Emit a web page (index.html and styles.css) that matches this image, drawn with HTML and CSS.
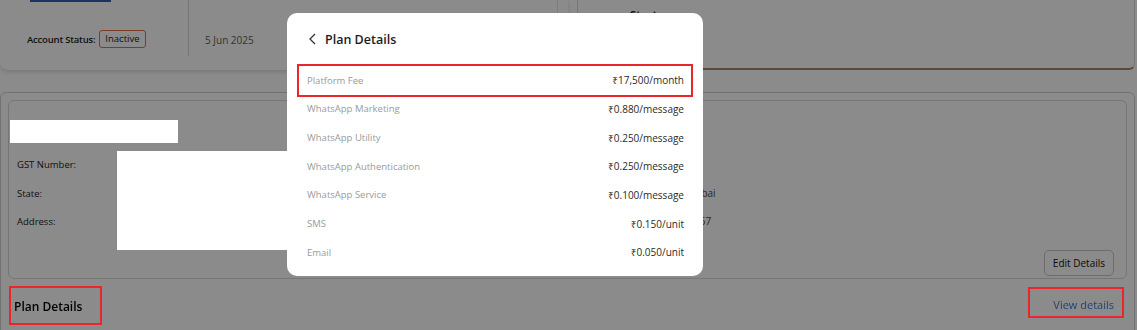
FILE: index.html
```html
<!DOCTYPE html>
<html lang="en">
<head>
  <meta charset="UTF-8" />
  <meta name="viewport" content="width=device-width, initial-scale=1.0" />
  <title>Account – Plan Details</title>
  <link rel="stylesheet" href="styles.css">
</head>
<body>
  <div class="top">
    <div class="account-card">
      <div class="col col-status">
        <div class="btn-edge"></div>
        <div class="status-line">
          <span class="status-label">Account Status:</span>
          <span class="badge">Inactive</span>
        </div>
      </div>
      <div class="col col-date">
        <span class="date">5 Jun 2025</span>
      </div>
      <div class="col col-end"></div>
    </div>
    <div class="plan-card">
      <span class="plan-name">Starter</span>
    </div>
  </div>

  <div class="section">
    <div class="info-card">
      <div class="redact redact-name"></div>
      <div class="fields">
        <div class="labels">
          <div class="label">GST Number:</div>
          <div class="label">State:</div>
          <div class="label">Address:</div>
        </div>
        <div class="redact redact-values"></div>
        <div class="values-right">
          <div class="value">&nbsp;</div>
          <div class="value">Mumbai</div>
          <div class="value">400057</div>
        </div>
      </div>
      <div class="card-foot">
        <button class="btn-outline">Edit Details</button>
      </div>
    </div>

    <div class="plan-row">
      <h2 class="mark plan-title">Plan Details</h2>
      <a class="mark view-link" href="#">View details</a>
    </div>
  </div>

  <div class="overlay"></div>

  <div class="modal">
    <div class="modal-head">
      <svg class="back" width="10" height="12" viewBox="0 0 10 12">
        <polyline points="7,1 2,6 7,11" fill="none" stroke="#333" stroke-width="1.3" />
      </svg>
      <span class="modal-title">Plan Details</span>
    </div>
    <div class="rates">
      <div class="rate rate-marked"><span class="rate-name">Platform Fee</span><span class="rate-value">₹17,500/month</span></div>
      <div class="rate"><span class="rate-name">WhatsApp Marketing</span><span class="rate-value">₹0.880/message</span></div>
      <div class="rate"><span class="rate-name">WhatsApp Utility</span><span class="rate-value">₹0.250/message</span></div>
      <div class="rate"><span class="rate-name">WhatsApp Authentication</span><span class="rate-value">₹0.250/message</span></div>
      <div class="rate"><span class="rate-name">WhatsApp Service</span><span class="rate-value">₹0.100/message</span></div>
      <div class="rate"><span class="rate-name">SMS</span><span class="rate-value">₹0.150/unit</span></div>
      <div class="rate"><span class="rate-name">Email</span><span class="rate-value">₹0.050/unit</span></div>
    </div>
  </div>
</body>
</html>
```

FILE: styles.css
```css
:root {
  --line: #d8d8d8;
  --text: #1c1c1c;
  --muted: #9a9a9a;
  --mark: #e8262b;
}
* {
  box-sizing: border-box;
  font-family: "Open Sans", "Noto Sans", sans-serif;
}
body {
  margin: 0;
  width: 1137px;
  height: 330px;
  overflow: hidden;
  background: #fff;
  color: var(--text);
}

/* top cards */
.top {
  display: flex;
  height: 70px;
}
.account-card {
  width: 568px;
  display: flex;
  border-radius: 0 0 8px 8px;
  box-shadow: 0 2px 4px rgba(0, 0, 0, 0.14);
}
.col {
  height: 56px;
}
.col-status {
  width: 188px;
  padding-left: 30px;
}
.btn-edge {
  width: 81px;
  height: 2px;
  background: #2d62b5;
}
.status-line {
  margin-top: 28px;
  margin-left: -3px;
  display: flex;
  align-items: center;
  gap: 4px;
}
.status-label {
  font-size: 9.5px;
  font-weight: 600;
  letter-spacing: -0.2px;
}
.badge {
  font-size: 9.5px;
  line-height: 16px;
  padding: 0 5px;
  border: 1px solid #e8703f;
  border-radius: 3px;
}
.col-date {
  width: 369px;
  border-left: 1px solid var(--line);
  padding: 27px 0 0 16px;
}
.date {
  font-size: 10px;
  color: #606060;
}
.col-end {
  flex: 1;
  border-left: 1px solid #e6e6e6;
}
.plan-card {
  flex: 1;
  margin: 0 2px 0 9px;
  border: 1px solid var(--line);
  border-top: none;
  border-bottom: 2px solid #a8846a;
  border-radius: 0 0 6px 6px;
  padding-left: 52px;
}
.plan-name {
  display: block;
  margin-top: 7px;
  font-size: 11px;
  font-weight: 700;
}

/* lower section */
.section {
  width: 1135px;
  margin-top: 22px;
  border: 1px solid #d0d0d0;
  border-radius: 6px;
  padding: 7px 7px 0;
}
.info-card {
  height: 179px;
  border: 1px solid var(--line);
  border-radius: 6px;
  display: flex;
  flex-direction: column;
}
.redact {
  flex: none;
  background: #fff;
  position: relative;
  z-index: 15;
}
.redact-name {
  width: 168px;
  height: 23px;
  margin: 19px 0 0 1px;
}
.fields {
  flex: none;
  display: flex;
  align-items: flex-start;
  margin-top: 8px;
}
.labels {
  flex: none;
  width: 108px;
  padding-left: 8px;
}
.label {
  font-size: 9.5px;
  line-height: 28.5px;
}
.redact-values {
  width: 170px;
  height: 99px;
}
.values-right {
  flex: none;
  margin: -1px 0 0 390px;
}
.value {
  font-size: 10px;
  line-height: 28.5px;
  color: #4a4a4a;
}
.card-foot {
  margin-top: auto;
  display: flex;
  justify-content: flex-end;
  padding: 0 12px 7px;
}
.btn-outline {
  font-size: 10px;
  color: #111;
  background: transparent;
  border: 1px solid #c8c8c8;
  border-radius: 5px;
  height: 26px;
  padding: 0 8px;
}
.plan-row {
  display: flex;
  justify-content: space-between;
  align-items: flex-start;
  height: 60px;
  padding: 7px 3px 0 1px;
}
.mark {
  position: relative;
  z-index: 15;
  border: 2px solid var(--mark);
}
.plan-title {
  margin: 0;
  width: 93px;
  height: 39px;
  padding: 10px 0 0 3px;
  font-size: 12px;
  font-weight: 600;
  color: #000;
}
.view-link {
  margin-top: 1px;
  width: 96px;
  height: 31px;
  padding: 8px 8px 0 0;
  text-align: right;
  font-size: 11px;
  color: #21446f;
  text-decoration: none;
}

/* modal */
.overlay {
  position: fixed;
  inset: 0;
  background: rgba(0, 0, 0, 0.455);
  z-index: 10;
}
.modal {
  position: fixed;
  left: 287px;
  top: 13px;
  width: 416px;
  height: 263px;
  z-index: 20;
  background: #fff;
  border-radius: 10px;
  padding: 16px 12px 0;
}
.modal-head {
  display: flex;
  align-items: center;
  gap: 7px;
  height: 20px;
  padding-left: 9px;
}
.back {
  flex: none;
}
.modal-title {
  font-size: 12.5px;
  font-weight: 600;
  color: #1c1c1c;
}
.rates {
  margin-top: 17px;
}
.rate {
  display: flex;
  justify-content: space-between;
  align-items: center;
  height: 28.67px;
  padding: 0 7px 0 8px;
}
.rate-marked {
  outline: 2px solid var(--mark);
}
.rate-name {
  font-size: 9.5px;
  color: var(--muted);
}
.rate-value {
  font-size: 10px;
  color: #2a2a2a;
}
```
